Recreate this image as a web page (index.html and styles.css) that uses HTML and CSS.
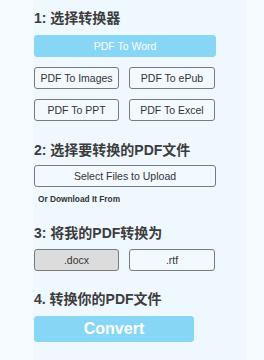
FILE: index.html
```html
<!DOCTYPE html>
<html lang="zh">
<head>
    <meta charset="UTF-8">
    <meta name="viewport" content="width=device-width, initial-scale=1.0">
    <title>PDF 转换器</title>
    <link rel="stylesheet" href="styles.css">
</head>
<body>
    <div class="panel">
        <h3 class="step-title">1: 选择转换器</h3>
        <button type="button" class="btn btn-primary btn-wide">PDF To Word</button>
        <div class="choice-grid">
            <button type="button" class="btn">PDF To Images</button>
            <button type="button" class="btn">PDF To ePub</button>
            <button type="button" class="btn">PDF To PPT</button>
            <button type="button" class="btn">PDF To Excel</button>
        </div>

        <h3 class="step-title step-gap">2: 选择要转换的PDF文件</h3>
        <button type="button" class="btn btn-wide">Select Files to Upload</button>
        <p class="note">Or Download It From</p>

        <h3 class="step-title step-gap-sm">3: 将我的PDF转换为</h3>
        <div class="choice-grid format-row">
            <button type="button" class="btn btn-selected">.docx</button>
            <button type="button" class="btn">.rtf</button>
        </div>

        <h3 class="step-title step-gap-sm">4. 转换你的PDF文件</h3>
        <button type="button" class="btn btn-primary btn-convert">Convert</button>
    </div>
</body>
</html>
```

FILE: styles.css
```css
body {
    margin: 0;
    background-color: #f6fbff; /* lighter page edges */
    font-family: "Liberation Sans", "Noto Sans CJK SC", sans-serif;
}
.panel {
    margin-left: 33px;
    width: 214px;
    min-height: 360px;
    padding: 9px 0 0 1px;
    box-sizing: border-box;
    background-color: #f0f8ff;
}
.step-title {
    margin: 0;
    font-size: 14px;
    line-height: 18px;
    font-weight: 600;
    color: #3c3c3c;
}
.step-gap {
    margin-top: 20px;
}
.step-gap-sm {
    margin-top: 19px;
}
.btn {
    display: block;
    height: 22px;
    padding: 0;
    border: 1px solid #7a7a7a;
    border-radius: 3px;
    background-color: #f2f9ff;
    color: #333;
    font-family: inherit;
    font-size: 10.5px;
    cursor: pointer;
}
.btn-wide {
    width: 182px;
    margin-top: 6px;
}
.btn-primary {
    border-color: #8ad6f6;
    background-color: #88d6f6;
    color: #fff;
}
.btn-primary.btn-wide {
    margin-top: 8px;
}
.choice-grid {
    display: grid;
    grid-template-columns: 85px 86px;
    gap: 10px;
    margin-top: 10px;
}
.choice-grid .btn {
    width: 100%;
}
.format-row {
    margin-top: 7px;
}
.btn-selected {
    background-color: #dcdcdc;
}
.note {
    margin: 6px 0 0 4px;
    font-size: 8.3px;
    line-height: 12px;
    font-weight: bold;
    color: #333;
}
.btn-convert {
    width: 160px;
    height: 26px;
    margin-top: 8px;
    font-size: 16px;
    font-weight: bold;
}
```
